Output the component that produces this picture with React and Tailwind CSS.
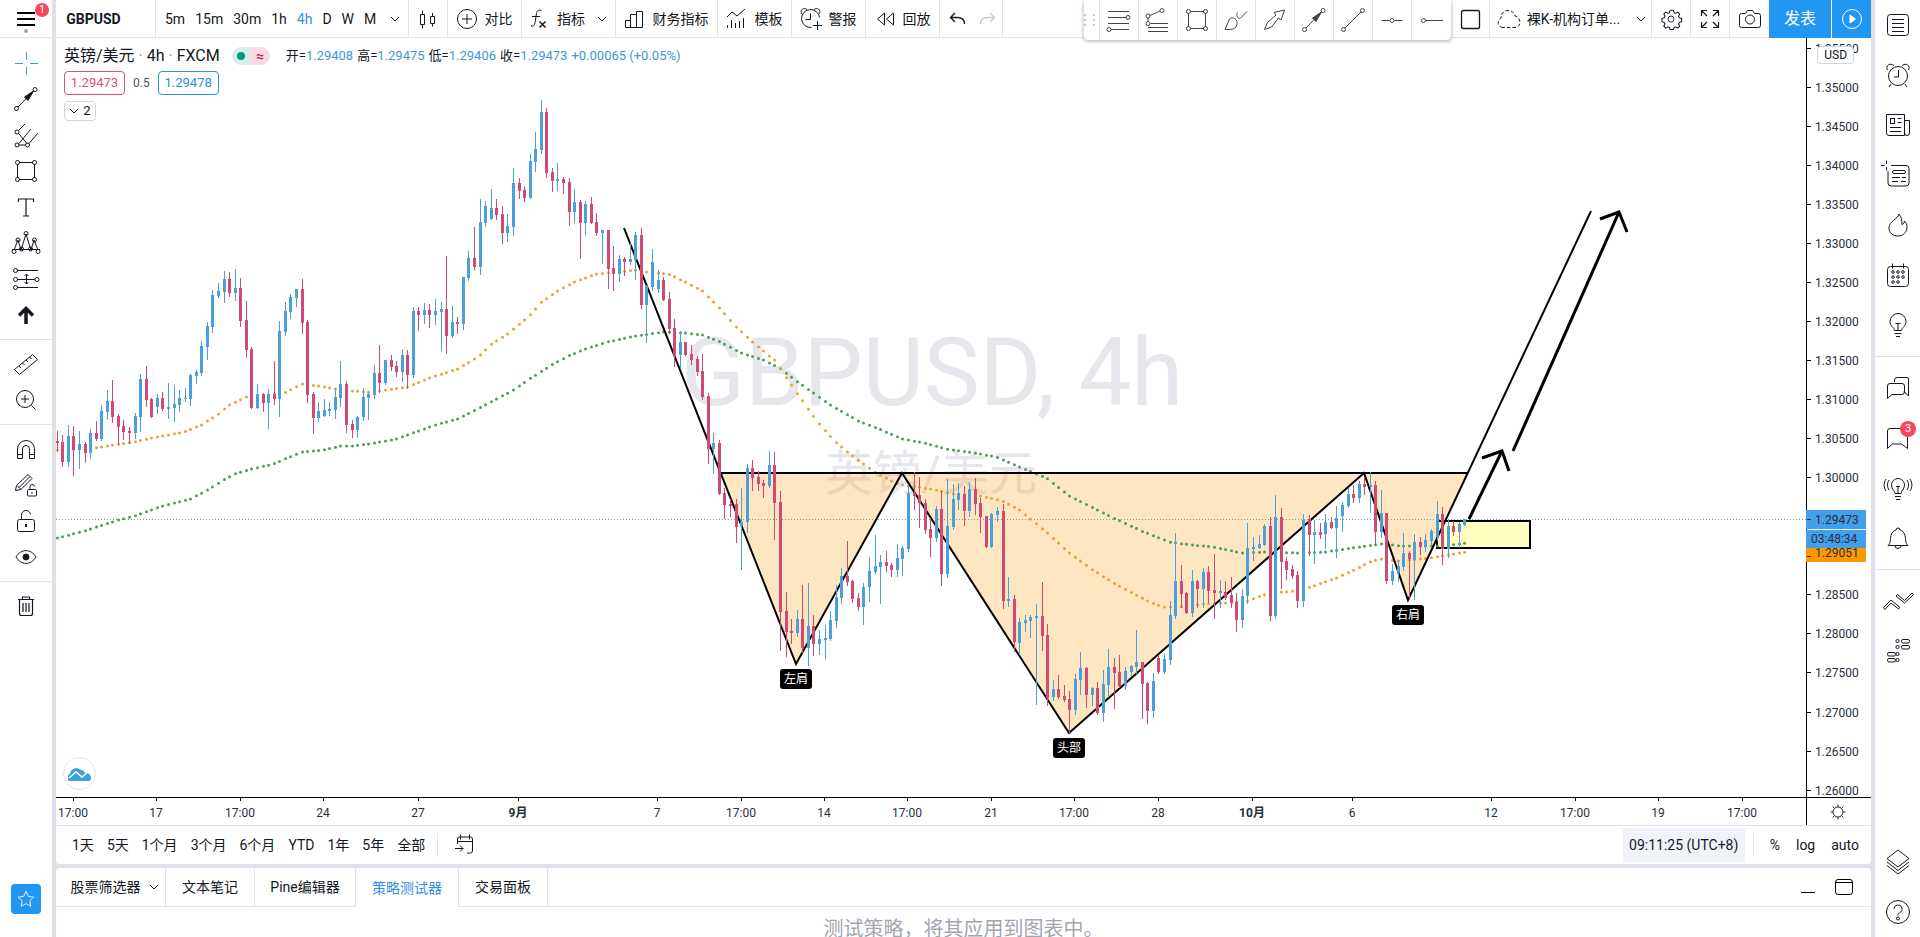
import clsx from 'clsx';

// high, body top, body bottom, low (chart pixels), prefixed with the direction
const CANDLES = `
d431,441,443,451 d435,442,462,466 u425,436,462,466 d426,436,450,475 u431,444,450,468 d442,444,453,462
u429,433,453,458 d421,433,439,440 u405,411,439,440 u390,401,412,419 d380,401,417,422 d414,416,427,444
d420,426,432,439 d427,431,433,443 u413,416,433,438 u374,379,417,431 d366,379,400,406 d398,399,417,417
u394,398,407,413 d392,398,409,410 u383,407,409,418 u385,404,408,421 u390,398,405,411 u388,398,399,401
u374,375,399,405 u370,372,376,383 u341,346,373,375 u322,326,347,359 u290,295,327,332 u283,291,296,297
u271,279,292,302 d272,279,293,296 u269,288,293,300 d278,288,321,326 d301,320,350,357 d347,349,408,408
u384,394,408,408 d393,394,403,411 u389,394,403,428 d361,394,399,404 u321,331,399,416 u302,311,332,335
u294,297,312,318 u289,289,298,306 d279,289,323,333 d320,322,395,402 d392,394,418,433 u402,411,418,421
u399,410,416,416 u402,409,411,415 u388,397,410,418 u361,384,398,406 d381,384,425,432 d420,424,430,437
u416,417,430,437 u388,397,417,420 u392,394,398,419 u365,373,395,398 d345,373,383,392 u360,360,383,384
d355,360,367,370 d361,366,372,376 u349,355,372,381 d350,355,375,388 u307,311,375,377 d307,311,315,330
u303,310,315,323 d304,310,315,327 u299,311,315,324 u302,309,312,350 d256,309,336,353 u306,322,336,337
d317,322,324,333 u277,277,324,329 u251,258,278,280 d227,258,267,269 u199,222,267,274 u201,206,223,226
u189,208,219,219 d199,208,215,219 d206,214,233,243 u214,226,233,241 u168,183,227,235 d178,183,191,198
d186,190,198,201 u154,161,198,198 u132,149,162,171 u100,112,150,153 d108,112,173,177 d168,172,181,191
u163,179,181,190 d177,179,183,193 d178,182,212,225 u189,202,212,222 d200,202,223,258 u201,204,223,234
d197,204,223,223 d213,222,233,235 u230,230,233,263 d230,230,269,288 d246,268,274,290 u255,259,274,281
d257,259,262,275 u243,259,262,264 u232,235,260,279 d228,235,305,308 u285,286,305,342 u249,262,287,290
u270,280,289,292 d277,280,300,300 d292,299,329,333 d319,328,355,366 u333,342,355,368 d342,342,355,355
d345,354,360,364 d356,359,372,375 d354,371,397,399 d393,396,449,463 u433,443,449,473 d440,443,494,494
d488,493,505,518 d499,504,506,516 d499,504,527,542 u488,522,526,569 u464,468,522,532 d460,468,478,490
d471,477,484,490 d480,483,486,497 u451,465,486,487 d452,465,503,539 d491,502,612,650 d592,611,632,656
d619,631,633,643 u610,619,633,636 d585,619,648,652 u583,626,648,665 d615,626,644,655 u630,639,644,654
u625,638,640,658 u611,620,639,640 u585,597,621,627 u568,576,598,603 d541,576,582,585 d580,581,599,602
d593,598,607,610 u583,587,607,624 u557,571,587,601 u535,566,572,573 u555,562,567,603 d551,562,566,571
d563,565,570,576 u544,558,570,576 u546,548,559,575 u485,493,549,551 d472,493,496,509 d477,495,503,527
d499,503,530,533 d518,529,538,556 u506,509,538,541 d491,509,574,585 u479,526,574,577 u484,499,527,529
u483,493,500,509 d486,494,511,525 u482,489,511,516 d478,489,504,514 d498,503,517,532 d516,516,547,547
u513,514,547,547 u507,511,515,521 d504,511,601,608 u577,599,601,606 d595,599,642,651 u618,622,643,654
u615,620,623,631 u615,617,621,637 u604,616,618,704 d582,616,636,650 d624,635,698,705 u680,689,697,700
d675,689,697,698 d685,696,700,701 d691,699,710,732 u674,679,710,714 u652,668,680,694 d667,668,695,707
u687,688,695,705 d682,688,713,714 u670,684,713,721 u649,667,685,695 d658,667,673,708 d655,672,686,687
u667,671,686,689 u665,666,672,675 u630,662,667,673 d662,662,684,718 d682,683,711,723 u673,681,711,717
d655,658,672,673 u654,659,672,673 u601,615,660,664 u533,581,616,618 d565,581,594,607 d592,593,613,613
u570,581,613,616 d580,581,589,607 u568,572,589,607 d566,572,591,602 d554,590,593,618 u580,591,593,607
d581,592,598,599 d577,595,603,607 d593,602,620,631 u589,596,620,627 u523,548,596,603 u537,547,549,560
u535,544,548,548 u524,526,545,545 d517,526,616,620 u495,517,616,618 d508,517,562,588 d557,561,570,579
d565,569,576,578 d571,575,601,607 u514,520,601,606 d515,519,535,555 u520,532,535,563 d523,532,535,538
u514,522,534,548 d517,522,528,528 u506,518,528,557 u502,505,516,531 u488,494,506,507 d485,494,498,502
u481,484,498,502 d477,484,487,494 u472,485,487,512 d481,485,532,544 u490,513,532,537 d513,513,581,583
u564,571,581,584 u560,566,572,581 u533,553,567,570 d551,553,559,597 u534,542,560,599 d537,542,547,554
u534,540,547,551 u529,531,541,546 u501,514,537,540 d507,514,549,564 u519,526,549,557 d521,526,532,535
u522,524,532,547 u519,519,525,525
`.trim().split(/\s+/).map((c, i) => {
    const [high, top, bottom, low] = c.slice(1).split(',').map(Number);
    return { x: Math.round(56.7 + i * 5.564), up: c[0] === 'u', high, top, bottom, low };
});

const MA_FAST = [
    [57, 450], [95, 448], [112, 445], [134, 442], [151, 438], [184, 432], [201, 425], [218, 414], [229, 405],
    [246, 397], [284, 393], [301, 384], [318, 386], [335, 389], [351, 391], [368, 392], [385, 390], [407, 387],
    [429, 378], [457, 369], [479, 356], [490, 345], [507, 334], [529, 316], [540, 303], [557, 291], [574, 282],
    [596, 274], [635, 270], [646, 272], [668, 274], [685, 282], [702, 291], [718, 307], [735, 326], [752, 342],
    [774, 360], [791, 385], [807, 408], [818, 423], [835, 442], [852, 456], [874, 472], [891, 481], [902, 485],
    [919, 487], [935, 490], [953, 494], [980, 496], [1002, 501], [1019, 510], [1046, 532], [1069, 553],
    [1091, 569], [1113, 583], [1130, 592], [1147, 601], [1163, 607], [1180, 607], [1202, 604], [1224, 603],
    [1247, 601], [1263, 595], [1280, 592], [1297, 591], [1313, 586], [1336, 578], [1358, 568], [1369, 562],
    [1380, 559], [1397, 561], [1420, 559], [1436, 557], [1465, 552],
];

const MA_SLOW = [
    [57, 538], [84, 531], [118, 520], [134, 516], [162, 506], [190, 499], [207, 490], [223, 480], [234, 474],
    [251, 469], [273, 464], [301, 452], [323, 450], [340, 446], [351, 446], [368, 444], [396, 439], [418, 431],
    [435, 425], [457, 419], [479, 408], [496, 399], [513, 390], [529, 379], [551, 365], [568, 356], [585, 349],
    [607, 342], [635, 336], [663, 332], [685, 333], [702, 335], [718, 341], [741, 353], [763, 360], [779, 368],
    [796, 381], [813, 393], [830, 405], [858, 421], [874, 427], [902, 439], [924, 443], [946, 449], [974, 453],
    [996, 457], [1019, 467], [1046, 478], [1069, 496], [1097, 510], [1113, 518], [1135, 528], [1141, 531],
    [1169, 542], [1191, 545], [1213, 547], [1241, 553], [1263, 552], [1297, 553], [1325, 552], [1352, 548],
    [1380, 544], [1402, 546], [1436, 546], [1452, 545], [1465, 543],
];

const valueAt = (points, x) => {
    const i = points.findIndex(([px]) => px >= x);
    if (i <= 0) return points[0][1];
    const [x0, y0] = points[i - 1];
    const [x1, y1] = points[i];
    return y0 + ((x - x0) / (x1 - x0)) * (y1 - y0);
};

const PRICES = Array.from({ length: 20 }, (_, i) => ({
    label: (1.355 - i * 0.005).toFixed(5),
    y: Math.round(48.5 + i * 39.06),
})).filter(({ label }) => label !== '1.29500' && label !== '1.29000');

const TIMES = [
    [73, '17:00'], [156, '17'], [240, '17:00'], [323, '24'], [418, '27'], [518, '9月', true], [657, '7'],
    [741, '17:00'], [824, '14'], [907, '17:00'], [991, '21'], [1074, '17:00'], [1158, '28'], [1252, '10月', true],
    [1352, '6'], [1491, '12'], [1575, '17:00'], [1658, '19'], [1742, '17:00'],
];

const PATTERN_LABELS = [[796, 679, '左肩'], [1069, 748, '头部'], [1408, 615, '右肩']];

const Icon = ({ children, className = 'size-7' }) => (
    <svg viewBox="0 0 28 28" fill="none" stroke="currentColor" className={clsx('shrink-0', className)} aria-hidden="true">
        {children}
    </svg>
);

const Chevron = () => (
    <svg viewBox="0 0 10 6" fill="none" stroke="currentColor" className="w-[10px] h-[6px] shrink-0" aria-hidden="true">
        <path d="M1 1l4 4 4-4" />
    </svg>
);

const Node = ({ x, y, r = 2 }) => <circle cx={x} cy={y} r={r} />;

const icons = {
    candles: <><path d="M6.5 9.5h4v10h-4zM8.5 5.5v4M8.5 19.5v4M16.5 11.5h4v7h-4zM18.500 8v3.500M18.500 18.500v3" /></>,
    compare: <><circle cx="14" cy="14" r="9.500" /><path d="M14 9v10M9 14h10" /></>,
    fx: <><path d="M16.500 5.500c-3-1-4.500 0-5 3l-1.500 9c-.5 3-1.500 4-4 3.500M7 11.500h8" /><path strokeWidth="1.500" d="M14.500 16.500l6 6M20.500 16.500l-6 6" /></>,
    financials: <path d="M4.500 15.500h5v7h-5zM9.500 9.500h6v13h-6zM15.500 6.500h6v16h-6z" />,
    templates: <path d="M4 12l5-5 5 4 8-7M4.500 20v3M8.500 15v8M12.500 18v5M16.500 16v7M20.500 13v10" />,
    alertAdd: <><path d="M22.500 12.500a9 9 0 1 0-8 10M13.500 8.500v6h-5" /><path d="M5 9C2 5 7 2 10 4.500M22 9c3-4-2-7-5-4.500M16 20.500h9M20.500 16v9" /></>,
    replay: <path d="M13.500 8v12l-7-6zM22.500 8v12l-7-6z" />,
    undo: <path strokeWidth="1.300" d="M11 8l-4.500 4.500L11 17M7 12.500h6c4.500 0 7.500 2 7.500 6.500" />,
    redo: <path strokeWidth="1.300" d="M17 8l4.500 4.500L17 17M21 12.500h-6c-4.500 0-7.500 2-7.500 6.500" />,
    fibRetrace: <><path d="M3 5.500h21M3 11.500h18M3 17.500h21M6 23.500h18" /><Node x="23" y="11.500" /><Node x="4" y="23.500" /></>,
    fibExt: <><path d="M6 9.500l10-4.500M4 12v3.500M6.500 17.500h17.500M4 21.500h20M4 25.500h20" /><Node x="4" y="10" /><Node x="18" y="4.500" /><Node x="4" y="17.500" /></>,
    box: <><path d="M7 5.500h14M7 22.500h14M5.500 7v14M22.500 7v14" /><Node x="5.500" y="5.500" /><Node x="22.500" y="5.500" /><Node x="5.500" y="22.500" /><Node x="22.500" y="22.500" /></>,
    brush: <path d="M3 23.500L7.500 13c3.500-3 8.500.5 7.500 5.500-.8 3.500-4 5-6.500 5zM15.500 6.500c-1.500 3 0 6 2.500 6l7-7" />,
    arrowShape: <path d="M3.500 23.500l3-7L15 9l-2-2.500L23.500 4 20 14l-2.500-2-7 9z" />,
    arrow: <><path d="M6 22L21 6.500" /><path fill="currentColor" d="M12.500 12l9-6-5.500 9.500z" /><Node x="4.500" y="23.500" /><Node x="23" y="4.500" /></>,
    line: <><path d="M6 22L22 6" /><Node x="4.500" y="23.500" /><Node x="23.500" y="4.500" /></>,
    hline: <><path d="M3.500 14.500h8M16.500 14.500h8" /><Node x="14" y="14.500" /></>,
    hray: <><path d="M8 14.500h17" /><Node x="5.500" y="14.500" /></>,
    square: <rect x="5.500" y="5.500" width="18" height="18" rx="2" strokeWidth="1.300" />,
    cloud: <path strokeDasharray="3.500 2" d="M8 22.500a5 5 0 0 1-2-9.500c0-5 3-7.500 7-7.500s6 2 7 5.500c6 1 7 11 0 11.500z" />,
    gear: <><circle cx="14" cy="14" r="3.500" /><path strokeWidth="1.200" strokeLinejoin="round" d="M12 4.500h4l.7 2.800 1.800.8 2.500-1.400 2.300 2.300-1.400 2.500.8 1.800 2.800.7v4l-2.800.7-.8 1.800 1.400 2.500-2.300 2.300-2.500-1.400-1.800.8-.7 2.300h-4l-.7-2.300-1.800-.8L7 25.300 4.700 23l1.400-2.500-.8-1.800L2.500 18v-4l2.800-.7.800-1.800L4.700 9 7 6.700l2.500 1.400 1.800-.8z" transform="translate(.9 -.7)" /></>,
    fullscreen: <path strokeWidth="1.200" d="M5.500 11V5.500H11M6 6l5 5M17 5.500h5.500V11M22 6l-5 5M5.500 17v5.500H11M6 22l5-5M17 22.500h5.500V17M22 22l-5-5" />,
    camera: <><path d="M5.500 8.500h4l2-3h5l2 3h4a2 2 0 0 1 2 2v10a2 2 0 0 1-2 2h-17a2 2 0 0 1-2-2v-10a2 2 0 0 1 2-2z" /><circle cx="14" cy="14.500" r="4.500" /></>,
    play: <><circle cx="14" cy="14" r="9.500" /><path fill="currentColor" d="M12 10l5.500 4-5.500 4z" /></>,
    cross: <path d="M14.500 3v8M14.500 18v8M3 14.500h8M18 14.500h8" />,
    pitchfork: <><path d="M6.500 9.500L13 3M7 22.500L19 8M17 22.500L26 12M6.500 12.500l8.500 10M7 24h6.500" /><Node x="5" y="11" /><Node x="5" y="24" /><Node x="15.500" y="24" /></>,
    text: <path strokeWidth="1.200" d="M6.500 9V6h15v3M14 6v17M11 23h6" />,
    pattern: <><path d="M2 21l4-10 3 10 5-16 5 16 3-10 4 10M0 20.500h28" /><Node x="2" y="22.500" /><Node x="6" y="11" /><Node x="9.500" y="20" /><Node x="14" y="4.500" /><Node x="18.500" y="20" /><Node x="22.500" y="11" /><Node x="26" y="22.500" /></>,
    forecast: <><path d="M5 5.500h21M5 14.500h18M5 22.500h21M14.500 9v10M12.500 11l2-2 2 2M12.500 17l2 2 2-2" /><Node x="3.500" y="5.500" /><Node x="3.500" y="14.500" /><Node x="25" y="14.500" /><Node x="3.500" y="22.500" /></>,
    up: <path strokeWidth="3.500" d="M14 23V9M7 14.500L14 7.500l7 7" />,
    ruler: <path strokeLinejoin="round" d="M2.500 19.500L20.500 4.500l5 5-18 15zM7 16l2 2M10.500 13l2 2M14 10l2 2M17.500 7l2 2" />,
    zoom: <><circle cx="13" cy="13" r="8.500" /><path d="M13 9v8M9 13h8M19.500 19.500l4 4" /></>,
    magnet: <path d="M5.500 23.500V14a8.500 8.500 0 0 1 17 0v9.500h-5V14a3.500 3.500 0 0 0-7 0v9.500zM5.500 19.500h5M17.500 19.500h5" />,
    lockDraw: <><path strokeLinejoin="round" d="M3.500 19.500l1-5L16 3.500l4 4L9 18.500zM5 14.500l4 4M7 16.500L18 5.500" /><rect x="15.500" y="18.500" width="9" height="6.500" rx="1" /><path d="M18 18.500V16a2.200 2.200 0 0 1 4.500-.5M20 21v2" /></>,
    lock: <><rect x="5.500" y="12.500" width="17" height="12" rx="2" /><path d="M9.500 12.500V8.500a4.500 4.500 0 0 1 9-1" /><path strokeWidth="2" d="M14 17v3" /></>,
    eye: <><path d="M4 14c5-8.500 15-8.500 20 0-5 8.500-15 8.500-20 0z" /><circle cx="14" cy="14" r="3" fill="currentColor" /></>,
    trash: <path strokeWidth="1.200" d="M6 7.500h16M10.500 7V5h7v2M7.500 7.500v14a2 2 0 0 0 2 2h9a2 2 0 0 0 2-2v-14M11 11v9M14 11v9M17 11v9" />,
    star: <path strokeLinejoin="round" d="M14 5l2.800 6 6.200.8-4.500 4.400 1.100 6.300-5.600-3.100-5.600 3.100 1.100-6.300L5 11.800l6.200-.8z" />,
    list: <><rect x="3.500" y="3.500" width="21" height="21" rx="3" /><path d="M8 8.500h12M8 12.500h12M8 16.500h12M8 20.500h12" /></>,
    clock: <><circle cx="14" cy="15" r="9.500" /><path d="M14.500 9v7H10M3.500 9C1 4.500 6 1.500 10 4.500M24.500 9c2.500-4.500-2.500-7.500-6.500-4.500M7 23l-2 3M21 23l2 3" /></>,
    news: <><path d="M2.500 3.500h18v21H5a2.500 2.500 0 0 1-2.500-2.500zM20.500 9.500h5V22a2.500 2.500 0 0 1-5 0M13.500 7.500h4M13.500 11.500h4M6 16.500h11M6 20.500h11" /><rect x="6.500" y="7.500" width="4" height="5" /></>,
    dataWindow: <><path d="M7 4.500h15a3 3 0 0 1 3 3V22a3 3 0 0 1-3 3H7a3 3 0 0 1-3-3V10M2.500-.5v3.500M2.500 6v3.500M-3 4.500h3.500M4.500 4.500h0" /><rect x="8.500" y="9.500" width="13" height="3" rx="1.500" /><path d="M8 16.500h8M18 16.500h4M8 20.500h6M17 20.500h5" /></>,
    fire: <path strokeLinejoin="round" d="M15 3c-1 5-10 7-10 14 0 5 4 8 9 8s9-3.500 9-9c0-2.500-1-4.500-2.500-6-.3 2-1 3-2.500 3.500C18 9 17.500 6 15 3z" />,
    calendar: <><rect x="3.500" y="5.500" width="21" height="20" rx="3" /><path d="M8.500 2.500v5M19.500 2.500v5" />{[[11, 9], [11, 14], [11, 19], [16, 9], [16, 14], [16, 19], [21, 9], [21, 14]].map(([y, x]) => <circle key={`${x}-${y}`} cx={x} cy={y} r="1.300" />)}</>,
    bulb: <><path d="M10.500 19.500c0-3-4.500-4-4.500-9a8 8 0 0 1 16 0c0 5-4.500 6-4.500 9zM10.500 22.500h7M12 25.500h4M11.500 12.500h5M14 12.500v7" /></>,
    chats: <><path d="M10.500 8V6a2.500 2.500 0 0 1 2.500-2.500h10A1.500 1.500 0 0 1 24.500 5v17l-4-4h-1" /><path d="M3.500 24.500V12A2.500 2.500 0 0 1 6 9.500h12a2.500 2.500 0 0 1 2.500 2.500v6a2.500 2.500 0 0 1-2.500 2.500H8z" /></>,
    chat: <path d="M18 4.500H6A2.500 2.500 0 0 0 3.500 7v17.500l5-4.500h9l6 4.500V13" />,
    signal: <path d="M11 19.500c0-3-3.500-4-3.500-8.500a6.500 6.500 0 0 1 13 0c0 4.500-3.500 5.500-3.500 8.500zM11 22.500h6M12 25.500h4M12 12.500h4M14 12.500v7M5 6c-2 3-2 7 0 10M2 5c-2.500 4-2.500 8 0 12M23 6c2 3 2 7 0 10M26 5c2.500 4 2.500 8 0 12" />,
    bell: <path d="M4 21.500c3-2.500 2-6 3-10 1-3 2.500-5 5-5.500a2 2 0 0 1 4 0c2.500.5 4 2.500 5 5.500 1 4 0 7.500 3 10zM11 21.500a3 3 0 0 0 6 0" />,
    zigzag: <path strokeLinejoin="round" d="M-.500 20.500L7 13l9 7.500-1.500 1.500L7 16l-6 6.500zM12 9l1.500-1.500 7 6L28 6l1.500 1.500-9 8.500z" />,
    dom: <>{[[21, 4], [21, 10], [7, 17], [7, 23]].map(([x, y]) => <g key={y}><rect x={x - 3.500} y={y - 1.500} width="8" height="3.500" rx="1.500" /><circle cx="13.500" cy={y} r="1.600" /></g>)}</>,
    layers: <path strokeLinejoin="round" d="M14 2l11 8.500L14 19 3 10.500zM3 14l11 8.500L25 14M3 17.500L14 26l11-8.500" />,
    help: <><circle cx="14" cy="14" r="11.500" /><path d="M10 11a4 4 0 1 1 5.500 3.700c-1.200.5-1.500 1.300-1.500 2.800" /><circle cx="14" cy="20.500" r="1.500" /></>,
    goto: <path d="M7.500 13V8a2 2 0 0 1 2-2h11a2 2 0 0 1 2 2v12a2 2 0 0 1-2 2H17M10.500 3.500v5M19.500 3.500v5M7.500 10.500h15M5 17.500h8M10 14.500l3 3-3 3" />,
};

const Cell = ({ icon, label, children, className, size }) => (
    <button type="button" aria-label={label} className={clsx('h-full flex items-center justify-center border-r border-[#e0e3eb]', className)}>
        {icon && <Icon className={size}>{icons[icon]}</Icon>}
        {children}
    </button>
);

const Header = () => (
    <header className="h-[38px] flex items-center border-b border-[#e0e3eb] shrink-0 text-sm">
        <Cell className="w-[100px] font-bold pr-6">GBPUSD</Cell>
        <div className="w-[253px] h-full flex items-center gap-[10px] pl-[9px] border-r border-[#e0e3eb]">
            {['5m', '15m', '30m', '1h', '4h', 'D', 'W', 'M'].map((t) => (
                <button key={t} type="button" className={clsx(t === '4h' && 'text-[#2f8fdf]')}>{t}</button>
            ))}
            <button type="button" aria-label="More intervals" className="ml-1"><Chevron /></button>
        </div>
        <Cell icon="candles" label="Chart type" className="w-[39px]" />
        <Cell icon="compare" className="w-[74px] gap-1 pr-1">对比</Cell>
        <Cell icon="fx" className="w-[66px] gap-1 border-r-0">指标</Cell>
        <Cell label="Favourite indicators" className="w-7"><Chevron /></Cell>
        <Cell icon="financials" className="w-[102px] gap-1 pr-1">财务指标</Cell>
        <Cell icon="templates" className="w-[74px] gap-1 pr-1">模板</Cell>
        <Cell icon="alertAdd" className="w-[74px] gap-1 pr-1">警报</Cell>
        <Cell icon="replay" className="w-[74px] gap-1 pr-1">回放</Cell>
        <Cell icon="undo" label="Undo" className="w-8 border-r-0 pl-1" />
        <Cell icon="redo" label="Redo" className="w-[31px] text-[#c5c8d0]" />
        <div className="ml-auto relative z-10 self-start flex h-10 bg-white rounded-b shadow-[0_1px_4px_rgba(0,0,0,0.35)] text-[#40444e]">
            <div className="w-4 grid grid-cols-2 gap-x-[2px] gap-y-[3px] place-content-center border-r border-[#e0e3eb]">
                {[0, 1, 2, 3, 4, 5].map((n) => <span key={n} className="size-[2px] bg-[#c5c8d0]" />)}
            </div>
            {['fibRetrace', 'fibExt', 'box', 'brush', 'arrowShape', 'arrow', 'line', 'hline', 'hray'].map((name) => (
                <Cell key={name} icon={name} label={name} className="w-[39px] last:border-r-0" />
            ))}
        </div>
        <Cell icon="square" label="Layout" className="w-[39px]" />
        <Cell icon="cloud" className="w-[162px] gap-1">
            <span>裸K-机构订单...</span>
            <span className="pl-3"><Chevron /></span>
        </Cell>
        <Cell icon="gear" label="Settings" className="w-[39px]" size="size-6" />
        <Cell icon="fullscreen" label="Fullscreen" className="w-[39px]" />
        <Cell icon="camera" label="Snapshot" className="w-[39px] border-r-0" />
        <button type="button" className="w-[62px] h-[38px] bg-[#2196f3] text-white text-base">发表</button>
        <button type="button" aria-label="Go live" className="w-10 h-[38px] bg-[#2196f3] text-white flex items-center justify-center border-l border-white">
            <Icon>{icons.play}</Icon>
        </button>
    </header>
);

const Dots = ({ points, color }) => (
    <g fill={color}>
        {CANDLES.map(({ x }) => <circle key={x} cx={x + 0.5} cy={valueAt(points, x)} r="1.5" />)}
    </g>
);

const PriceChart = () => (
    <svg viewBox="56 38 1815 787" className="w-full h-full block">
        <g fill="#e6e7ec" textAnchor="middle">
            <text x="932" y="405" fontSize="94">GBPUSD, 4h</text>
            <text x="931" y="490" fontSize="48">英镑/美元</text>
        </g>

        {/* head and shoulders areas */}
        <g fill="#ff9800" fillOpacity="0.24">
            <path d="M721 473L796 664 902 473z" />
            <path d="M902 473L1069 733 1364 473z" />
            <path d="M1364 473L1408 600 1468 473z" />
        </g>
        <rect x="1437" y="521" width="93" height="27" fill="#ffffc2" stroke="#000" strokeWidth="2" />
        <path d="M56 519.5H1806" stroke="#6fa3a3" strokeDasharray="1 2" />

        <Dots points={MA_SLOW} color="#4d9e58" />
        <Dots points={MA_FAST} color="#e9a13b" />

        <g fill="none" stroke="#000">
            <path strokeWidth="2" d="M721 473H1468" />
            <path strokeWidth="2" d="M624 228L796 664 902 473 1069 733 1364 473 1408 600 1591 211" />
            <path strokeWidth="3" d="M1469 519L1502 451M1482 458L1502 451 1509 471" />
            <path strokeWidth="3" d="M1513 451L1619 212M1600 219L1619 212 1627 232" />
        </g>

        {CANDLES.map(({ x, up, high, top, bottom, low }) => (
            <g key={x} fill={up ? '#4c9fd8' : '#cf4b76'}>
                <rect x={x} y={high} width="1" height={low - high + 1} />
                <rect x={x - 1} y={top} width="3" height={Math.max(bottom - top, 1)} />
            </g>
        ))}

        {PATTERN_LABELS.map(([x, y, label]) => (
            <g key={label}>
                <rect x={x - 16} y={y - 10} width="32" height="20" rx="3" />
                <text x={x} y={y + 4} fill="#fff" fontSize="12" textAnchor="middle">{label}</text>
            </g>
        ))}

        {/* axes */}
        <path d="M1806.500 38V825" stroke="#000" />
        <path d="M56 797.500H1871" stroke="#000" />
        <g fontSize="12" fill="#2a2e39">
            {PRICES.map(({ label, y }) => (
                <g key={label}>
                    <path d={`M1806 ${y - 0.5}h5`} stroke="#000" />
                    <text x="1815" y={y + 4}>{label}</text>
                </g>
            ))}
            {TIMES.map(([x, label, bold]) => (
                <g key={x}>
                    <path d={`M${x + 0.5} 797v4`} stroke="#000" />
                    <text x={x} y="817" textAnchor="middle" fontWeight={bold ? 700 : 400}>{label}</text>
                </g>
            ))}
            <rect x="1806" y="546" width="60" height="16" fill="#ff9800" />
            <text x="1815" y="557">1.29051</text>
            <rect x="1806" y="510" width="60" height="19" fill="#42a0ea" />
            <text x="1815" y="524">1.29473</text>
            <rect x="1806" y="530" width="60" height="18" fill="#42a0ea" />
            <text x="1811" y="543">03:48:34</text>
            <path d="M1807 519.500h4M1807 556.500h4" stroke="#2a2e39" />
        </g>
        <g fill="none" stroke="#2a2e39">
            <circle cx="1838" cy="812" r="5" />
            <path d="M1838 804.500v2.500M1838 817v2.500M1830.500 812h2.500M1843 812h2.500M1832.700 806.700l1.800 1.800M1841.500 815.500l1.800 1.800M1832.700 817.300l1.800-1.800M1841.500 808.500l1.800-1.800" />
        </g>
    </svg>
);

const Legend = () => (
    <div className="absolute left-2 top-2 flex flex-col items-start gap-[5px]">
        <div className="flex items-center h-5 text-base whitespace-nowrap">
            <span>英镑/美元 <span className="text-[#9598a1]">·</span> 4h <span className="text-[#9598a1]">·</span> FXCM</span>
            <span className="ml-3 flex h-[18px] w-[38px] rounded-full overflow-hidden">
                <span className="flex-1 bg-[#d8eeea] flex items-center justify-center"><span className="size-2 rounded-full bg-[#089981]" /></span>
                <span className="flex-1 bg-[#fbd9e3] flex items-center justify-center text-sm font-bold text-[#d81b60]">≈</span>
            </span>
            <span className="ml-4 flex gap-1 text-[13px]">
                {[['开', '1.29408'], ['高', '1.29475'], ['低', '1.29406'], ['收', '1.29473']].map(([k, v]) => (
                    <span key={k}>{k}=<span className="text-[#3d97d8]">{v}</span></span>
                ))}
                <span className="text-[#3d97d8]">+0.00065 (+0.05%)</span>
            </span>
        </div>
        <div className="flex items-center gap-2 text-[13px]">
            <button type="button" className="w-[61px] h-6 rounded border border-[#d9536b] text-[#d9536b]">1.29473</button>
            <span className="text-xs text-[#50535e]">0.5</span>
            <button type="button" className="w-[61px] h-6 rounded border border-[#2f8fdf] text-[#2f8fdf]">1.29478</button>
        </div>
        <button type="button" className="mt-px h-5 w-8 flex items-center justify-center gap-1 rounded-sm border border-[#d1d4dc] text-[13px] bg-white">
            <Chevron />2
        </button>
    </div>
);

const Toolbar = ({ groups, itemClass, className, children }) => (
    <nav className={className}>
        {groups.map((group, g) => (
            <div key={g} className={clsx('flex flex-col items-center', g > 0 && 'border-t border-[#e0e3eb] mt-[6px] pt-[6px]')}>
                {group.map((name) => (
                    <button key={name} type="button" aria-label={name} className={clsx(itemClass, 'relative w-full flex items-center justify-center', name === 'cross' && 'text-[#3d97d8]')}>
                        <Icon className="size-7 overflow-visible">{icons[name]}</Icon>
                        {name === 'chat' && <span className="absolute top-2 right-1 size-4 rounded-full bg-[#f7475f] text-white text-[11px] leading-4">3</span>}
                    </button>
                ))}
            </div>
        ))}
        {children}
    </nav>
);

const RangeBar = () => (
    <div className="h-[39px] shrink-0 flex items-center border-t border-[#e0e3eb] pl-4 pr-3 text-sm">
        <div className="flex gap-[13px]">
            {['1天', '5天', '1个月', '3个月', '6个月', 'YTD', '1年', '5年', '全部'].map((r) => (
                <button key={r} type="button">{r}</button>
            ))}
        </div>
        <span className="w-px h-6 bg-[#e0e3eb] mx-3" />
        <button type="button" aria-label="Go to"><Icon>{icons.goto}</Icon></button>
        <button type="button" className="ml-auto h-[34px] w-[122px] bg-[#f0f3fa]">09:11:25 (UTC+8)</button>
        <span className="w-px h-6 bg-[#e0e3eb] ml-2 mr-4" />
        <div className="flex gap-4">
            <button type="button">%</button>
            <button type="button">log</button>
            <button type="button">auto</button>
        </div>
    </div>
);

const BottomPanel = () => (
    <section className="h-[69px] shrink-0 bg-white rounded-t overflow-hidden flex flex-col">
        <div className="h-[39px] shrink-0 flex text-sm">
            {[['股票筛选器', 'w-[110px] pl-2'], ['文本笔记', 'w-[89px]'], ['Pine编辑器', 'w-[101px]'], ['策略测试器', 'w-[103px]'], ['交易面板', 'w-[89px]']].map(([tab, width]) => (
                <button
                    key={tab}
                    type="button"
                    className={clsx(width, 'flex items-center justify-center gap-2 border-r border-[#e0e3eb]', tab === '策略测试器' ? 'text-[#2f8fdf]' : 'border-b')}
                >
                    {tab}{tab === '股票筛选器' && <Chevron />}
                </button>
            ))}
            <div className="flex-1 flex items-center justify-end gap-5 pr-[18px] border-b border-[#e0e3eb]">
                <button type="button" aria-label="Minimize" className="w-[14px] h-3 border-b border-black" />
                <button type="button" aria-label="Maximize" className="w-[18px] h-4 rounded-[3px] border border-black flex items-start pt-[2px]">
                    <span className="w-full h-px bg-black" />
                </button>
            </div>
        </div>
        <p className="pt-2 text-center text-xl leading-7 text-[#a3a6af] whitespace-nowrap">测试策略，将其应用到图表中。</p>
    </section>
);

const App = () => (
    <div className="h-screen flex gap-1 bg-[#e0e0ea] text-[#131722] overflow-hidden font-[Roboto,'Noto_Sans_CJK_SC',sans-serif]">
        <aside className="w-[52px] shrink-0 bg-white flex flex-col">
            <button type="button" aria-label="Menu" className="h-[38px] relative border-b border-[#e0e3eb] flex flex-col items-center justify-center gap-1">
                <span className="w-[18px] h-[2px] bg-black" />
                <span className="w-[18px] h-[2px] bg-black" />
                <span className="w-[18px] h-[2px] bg-black" />
                <span className="absolute bottom-1 size-1 rounded-full bg-[#a3a6af]" />
                <span className="absolute top-[3px] right-[3px] size-[14px] rounded-full bg-[#f7475f] text-white text-[10px] leading-[14px]">1</span>
            </button>
            <Toolbar
                className="flex-1 flex flex-col pt-[7px]"
                itemClass="h-9"
                groups={[
                    ['cross', 'arrow', 'pitchfork', 'box', 'text', 'pattern', 'forecast', 'up'],
                    ['ruler', 'zoom'],
                    ['magnet', 'lockDraw', 'lock', 'eye'],
                    ['trash'],
                ]}
            >
                <button type="button" aria-label="Favourites" className="mt-auto mb-[23px] mx-auto size-[30px] rounded bg-[#2196f3] text-white flex items-center justify-center">
                    <Icon className="size-6">{icons.star}</Icon>
                </button>
            </Toolbar>
        </aside>

        <main className="flex-1 min-w-0 flex flex-col gap-1">
            <section className="flex-1 min-h-0 flex flex-col bg-white rounded-b">
                <Header />
                <div className="relative flex-1 min-h-0">
                    <PriceChart />
                    <Legend />
                    <span className="absolute right-[17px] top-2 px-[6px] h-[18px] leading-4 rounded border border-[#d1d4dc] bg-white text-xs">USD</span>
                    <button type="button" aria-label="TradingView" className="absolute left-[7px] bottom-[35px] size-[33px] rounded-full border border-[#e0e3eb] bg-white flex items-center justify-center">
                        <svg viewBox="0 0 24 18" className="w-6 h-[18px]" aria-hidden="true">
                            <path fill="#3d9fe0" d="M1 16a4 4 0 0 1 1-7c0-5 7-8 11-4 2 0 3 1 4 3 3-1 6 2 6 5 0 2-1 3-2 3z" />
                            <path fill="none" stroke="#fff" strokeWidth="1.500" d="M1 13l7-6 6 5 6-5" />
                        </svg>
                    </button>
                </div>
                <RangeBar />
            </section>
            <BottomPanel />
        </main>

        <Toolbar
            className="w-[45px] shrink-0 bg-white flex flex-col"
            itemClass="h-[50px]"
            groups={[
                ['list', 'clock', 'news', 'dataWindow', 'fire', 'calendar', 'bulb'],
                ['chats', 'chat', 'signal', 'bell'],
                ['zigzag', 'dom'],
            ]}
        >
            <div className="mt-auto flex flex-col">
                {['layers', 'help'].map((name) => (
                    <button key={name} type="button" aria-label={name} className="h-[50px] flex items-center justify-center">
                        <Icon>{icons[name]}</Icon>
                    </button>
                ))}
            </div>
        </Toolbar>
    </div>
);

export default App;
